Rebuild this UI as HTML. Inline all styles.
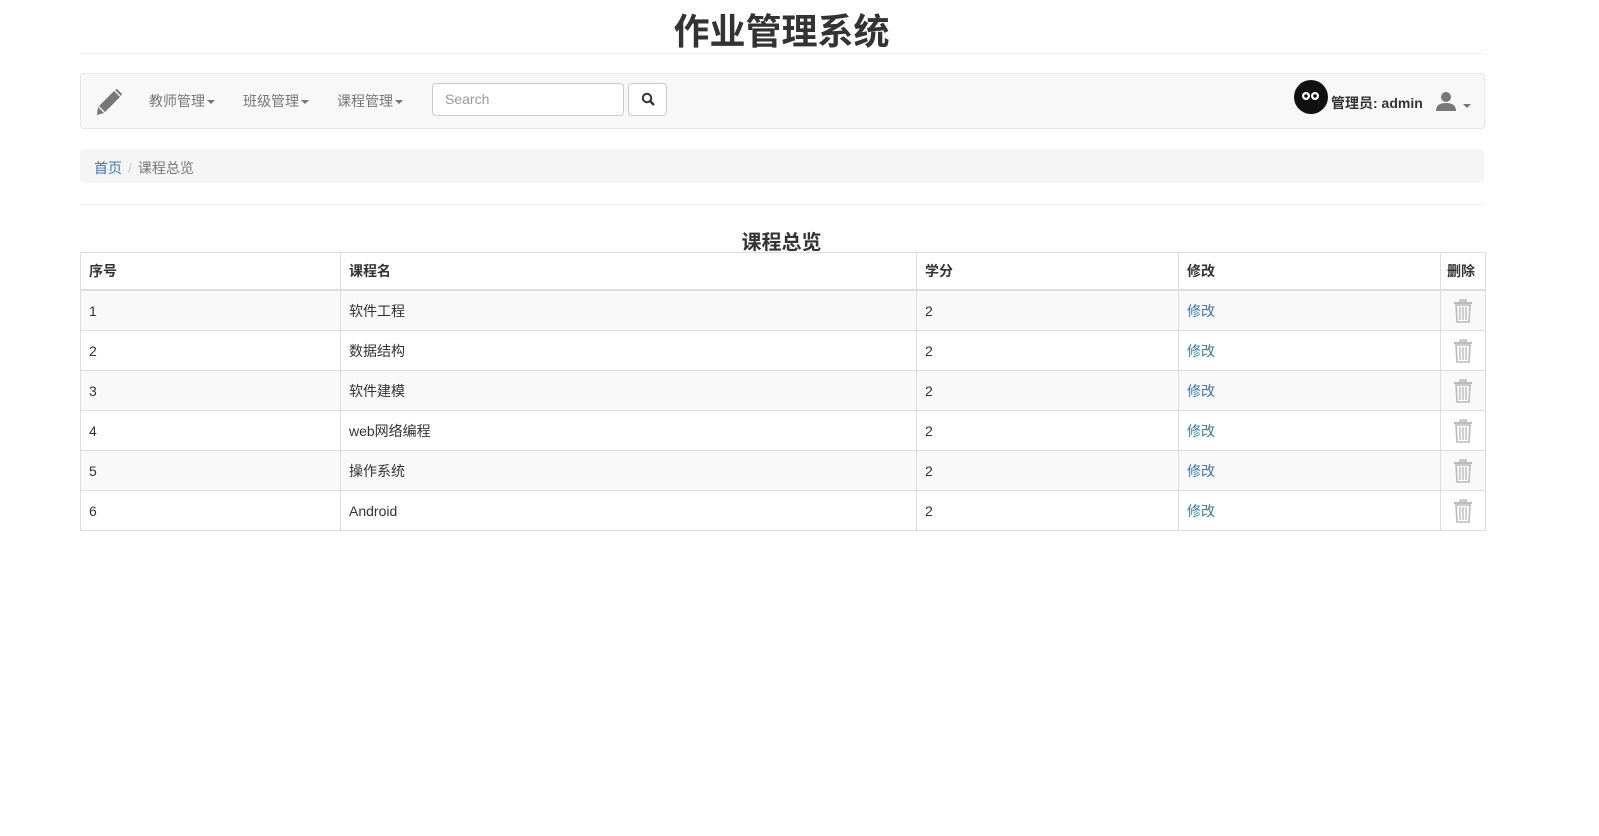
<!DOCTYPE html>
<html><head><meta charset="utf-8"><style>
body{margin:0;background:#fff;font-family:"Liberation Sans","Noto Sans CJK SC",sans-serif;font-size:14px;color:#333;}
.abs{position:absolute}
h1{position:absolute;left:0;width:1563px;top:8px;margin:0;text-align:center;font-size:36px;font-weight:bold;line-height:48px;color:#333}
.line{position:absolute;left:80px;width:1404px;height:1px;background:#eee}
.nav{position:absolute;left:80px;top:73px;width:1403px;height:54px;background:#f8f8f8;border:1px solid #e7e7e7;border-radius:4px}
.nav .m{position:absolute;top:17px;color:#777;font-size:14px}
.caret{display:inline-block;width:0;height:0;border-left:4px solid transparent;border-right:4px solid transparent;border-top:4px solid #777;vertical-align:middle;margin-left:2px}
.search{position:absolute;left:351px;top:9px;width:192px;height:33px;border:1px solid #ccc;border-radius:4px;background:#fff;color:#999;box-sizing:border-box;padding:7px 12px}
.btn{position:absolute;left:547px;top:9px;width:39px;height:33px;border:1px solid #ccc;border-radius:4px;background:#fff;box-sizing:border-box}
.bc{position:absolute;left:80px;top:149px;width:1404px;height:34px;background:#f5f5f5;border-radius:4px}
table{position:absolute;left:80px;top:252px;width:1405px;border-collapse:collapse;table-layout:fixed}
td,th{border:1px solid #ddd;padding:0 8px;text-align:left;height:39px;font-size:14px;white-space:nowrap;overflow:hidden}
th{font-weight:bold;height:36px;border-bottom:2px solid #ddd}
tr:nth-child(even) td{background:#f9f9f9}
a{color:#337ab7;text-decoration:none}
</style></head><body>
<h1>作业管理系统</h1>
<div class="line" style="top:53px"></div>
<div class="nav">
<svg class="abs" style="left:14px;top:14px" width="28" height="28" viewBox="0 0 28 28"><path d="M19 3l6 6L10 24l-6-6z" fill="#777"/><path d="M3 19l6 6-7 2z" fill="#777"/><path d="M20 2l2-1 5 5-1 2z" fill="#777"/></svg>
<span class="m" style="left:68px">教师管理<span class="caret"></span></span>
<span class="m" style="left:162px">班级管理<span class="caret"></span></span>
<span class="m" style="left:256px">课程管理<span class="caret"></span></span>
<div class="search">Search</div>
<div class="btn"><svg class="abs" style="left:12px;top:8px" width="14" height="14" viewBox="0 0 14 14"><circle cx="6" cy="6" r="4.2" fill="none" stroke="#333" stroke-width="2"/><path d="M9 9l4 4" stroke="#333" stroke-width="2.4"/></svg></div>
<svg class="abs" style="left:1210px;top:2px" width="40" height="40" viewBox="0 0 40 40"><circle cx="20" cy="21" r="17" fill="#111"/><circle cx="15" cy="20" r="4" fill="#fff"/><circle cx="24" cy="20" r="4" fill="#fff"/><circle cx="15" cy="20" r="1.7" fill="#000"/><circle cx="24" cy="20" r="1.7" fill="#000"/></svg>
<span class="abs" style="left:1250px;top:19px;font-weight:bold;color:#333">管理员: admin</span>
<svg class="abs" style="left:1354px;top:16px" width="22" height="22" viewBox="0 0 22 22"><circle cx="11" cy="7" r="5" fill="#777"/><path d="M1 21c0-6 4-8 10-8s10 2 10 8z" fill="#777"/></svg>
<span class="caret abs" style="left:1380px;top:30px"></span>
</div>
<div class="bc"><span class="abs" style="left:14px;top:9px"><a>首页</a><span style="color:#ccc;padding:0 6px">/</span><span style="color:#777">课程总览</span></span></div>
<div class="line" style="top:204px"></div>
<div class="abs" style="left:0;width:1563px;top:226px;text-align:center;font-size:20px;font-weight:bold">课程总览</div>
<table>
<colgroup><col style="width:260px"><col style="width:576px"><col style="width:262px"><col style="width:262px"><col style="width:45px"></colgroup>
<tr><th>序号</th><th>课程名</th><th>学分</th><th>修改</th><th style="padding:0 6px">删除</th></tr>
<tr><td>1</td><td>软件工程</td><td>2</td><td><a>修改</a></td><td>T</td></tr>
<tr><td>2</td><td>数据结构</td><td>2</td><td><a>修改</a></td><td>T</td></tr>
<tr><td>3</td><td>软件建模</td><td>2</td><td><a>修改</a></td><td>T</td></tr>
<tr><td>4</td><td>web网络编程</td><td>2</td><td><a>修改</a></td><td>T</td></tr>
<tr><td>5</td><td>操作系统</td><td>2</td><td><a>修改</a></td><td>T</td></tr>
<tr><td>6</td><td>Android</td><td>2</td><td><a>修改</a></td><td>T</td></tr>
</table>
<script>
document.querySelectorAll('td').forEach(function(td){if(td.textContent==='T'){td.style.padding='0';td.innerHTML='<svg width="22" height="26" viewBox="0 0 22 26" style="display:block;margin:0 auto"><path d="M8 2h6v2H8z" fill="none" stroke="#bbb" stroke-width="1.4"/><path d="M2 5h18" stroke="#bbb" stroke-width="2"/><path d="M4 7h14l-1 17H5z" fill="none" stroke="#bbb" stroke-width="1.6"/><path d="M8 9v13M11 9v13M14 9v13" stroke="#bbb" stroke-width="1.4"/></svg>';}});
</script>
</body></html>
